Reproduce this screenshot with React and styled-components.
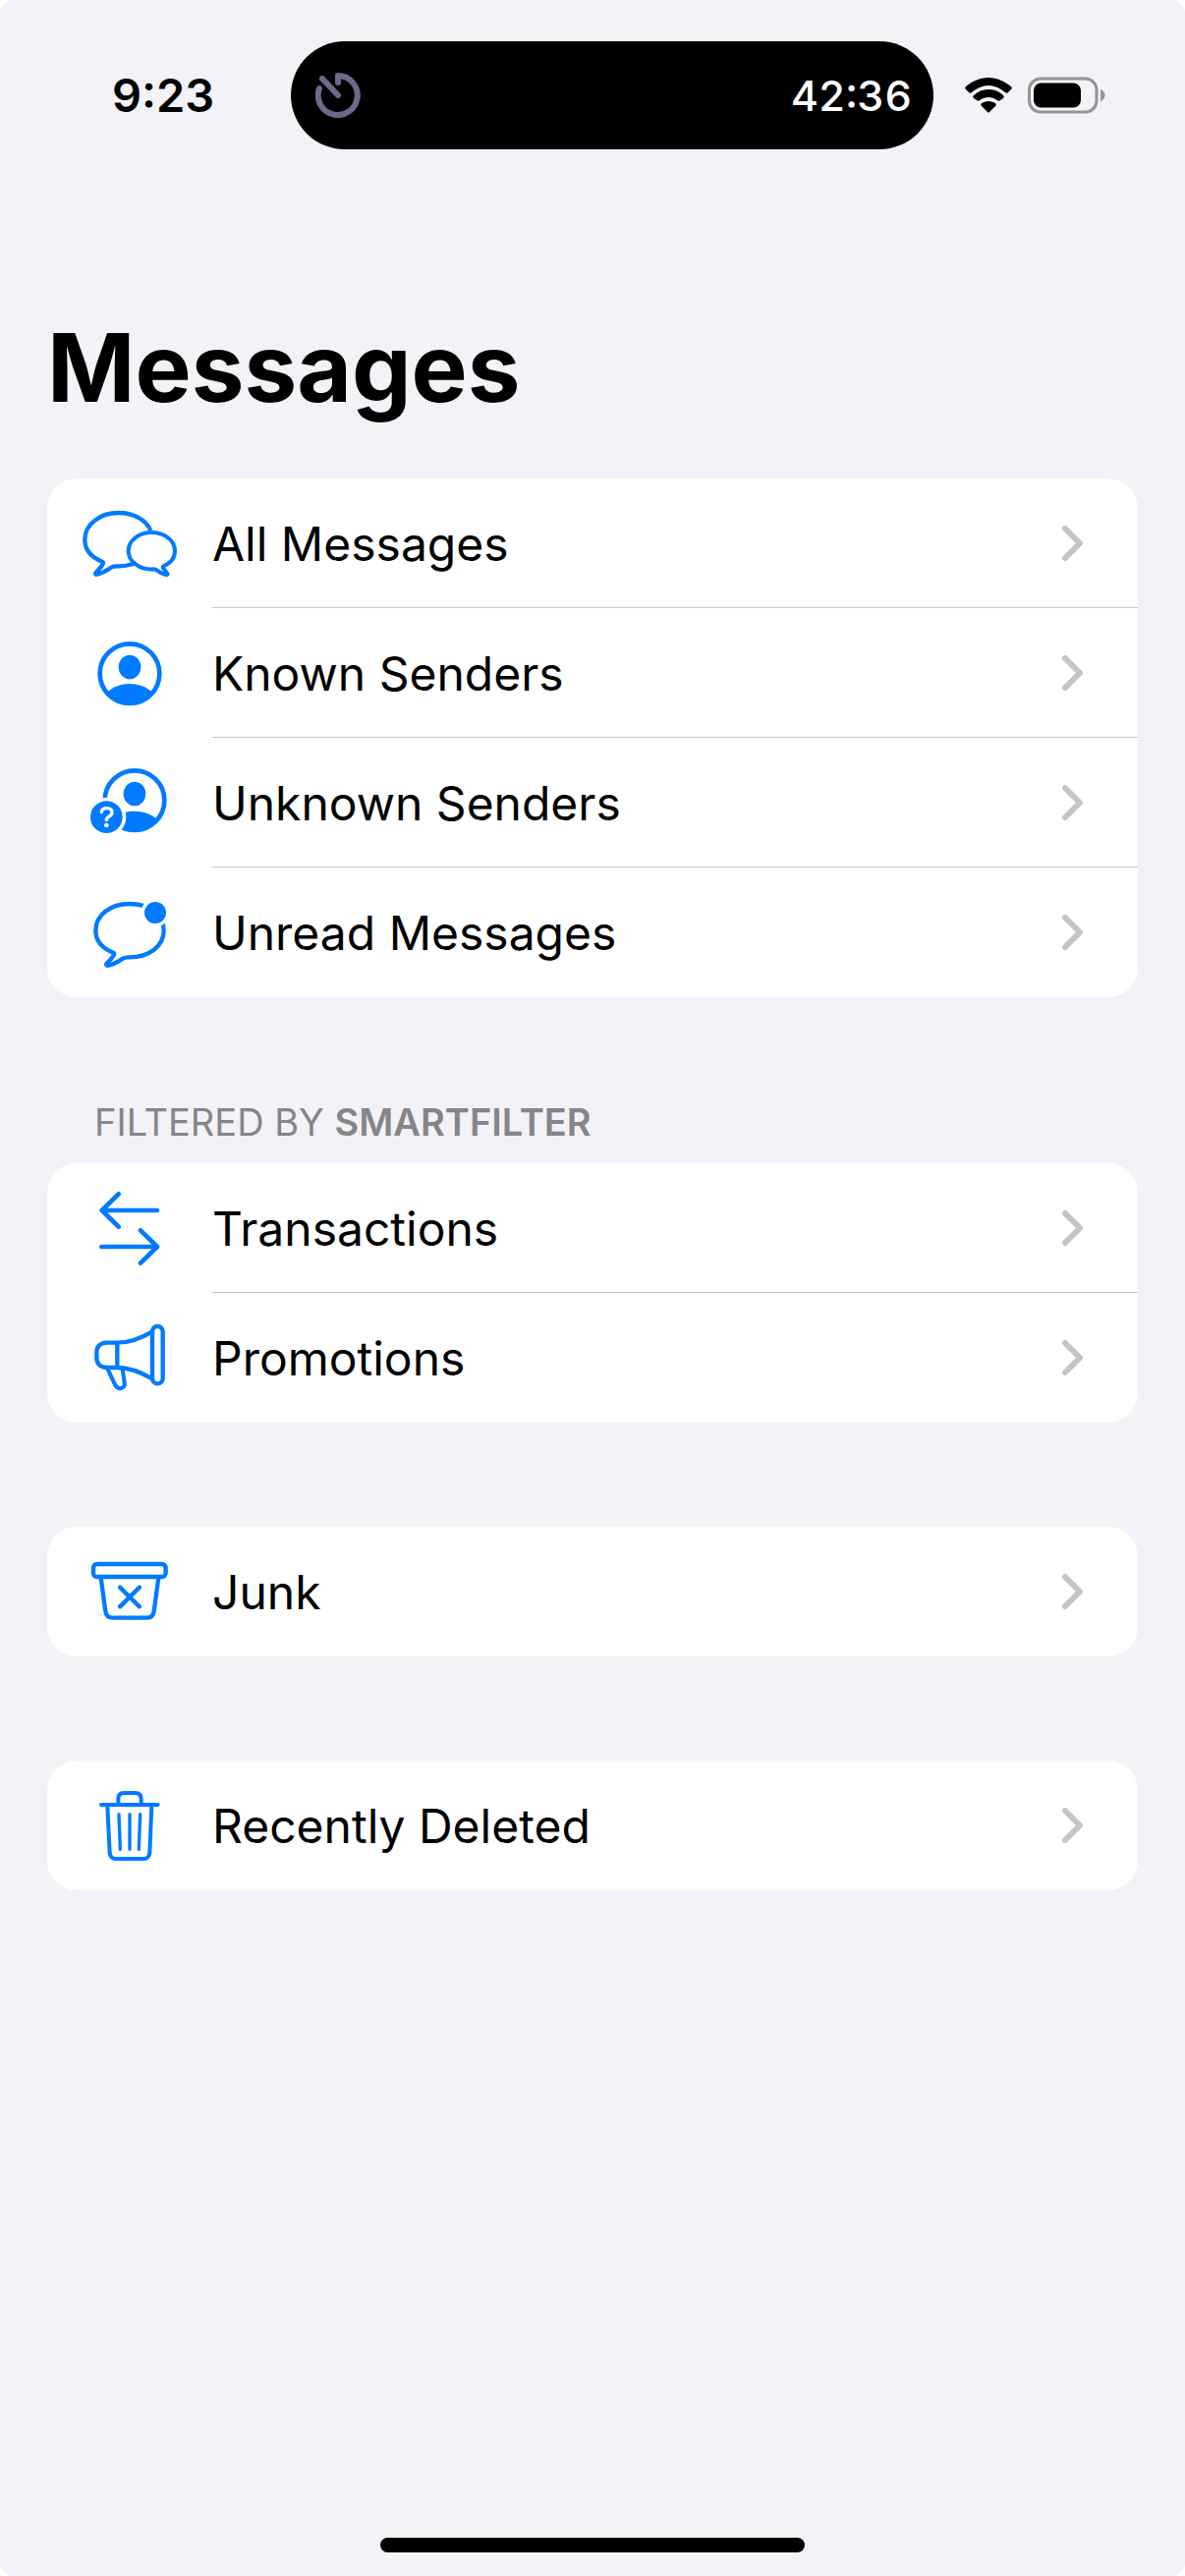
import React from "react";
import styled, { createGlobalStyle } from "styled-components";

const GlobalStyle = createGlobalStyle`
  *, *::before, *::after { box-sizing: border-box; }
  body {
    margin: 0;
    background: #ffffff;
    font-family: Inter, "Liberation Sans", sans-serif;
    color: #000000;
  }
`;

const Screen = styled.div`
  display: flex;
  flex-direction: column;
  min-height: 100vh;
  padding-bottom: 24px;
  border-radius: 14px;
  background: #f2f2f7;
`;

const StatusBar = styled.header`
  display: grid;
  grid-template-columns: 296px 1fr 256px;
  align-items: center;
  padding-top: 42px;
`;

const Clock = styled.time`
  padding-left: 114px;
  font-size: 47px;
  line-height: 56px;
  font-weight: 600;
`;

const Island = styled.div`
  display: flex;
  align-items: center;
  justify-content: space-between;
  height: 110px;
  padding: 0 22px 0 25px;
  border-radius: 55px;
  background: #000000;
  color: #ffffff;
`;

const Countdown = styled.span`
  font-size: 43px;
  line-height: 56px;
  font-weight: 500;
  font-variant-numeric: tabular-nums;
`;

const StatusIcons = styled.div`
  display: flex;
  align-items: center;
  gap: 16px;
  padding-left: 32px;
`;

const Main = styled.main`
  flex: 1;
  padding: 162px 48px 0;
`;

const Title = styled.h1`
  margin: 0 0 53px;
  font-size: 96px;
  line-height: 120px;
  font-weight: 700;
`;

const SectionHeading = styled.h2`
  margin: 0;
  padding: 0 48px;
  font-size: 38px;
  line-height: 42px;
  font-weight: 400;
  color: #85858a;
  strong { font-weight: 600; }
`;

const Section = styled.section`
  display: flex;
  flex-direction: column;
  gap: 21px;
  margin-bottom: 106px;
`;

const List = styled.ul`
  margin: 0;
  padding: 0;
  list-style: none;
  border-radius: 30px;
  background: #ffffff;
  overflow: hidden;
`;

const Row = styled.a`
  display: grid;
  grid-template-columns: 168px 1fr;
  height: 132px;
  color: inherit;
  text-decoration: none;
`;

const IconCell = styled.span`
  display: flex;
  align-items: center;
  justify-content: center;
  color: #007aff;
`;

const RowBody = styled.span`
  display: flex;
  align-items: center;
  justify-content: space-between;
  padding-right: 56px;
  border-bottom: 1px solid #c6c6c8;
  li:last-child & { border-bottom-color: transparent; }
`;

const RowLabel = styled.span`
  padding-top: 2px;
  font-size: 48px;
  line-height: 60px;
`;

const HomeBar = styled.div`
  align-self: center;
  width: 432px;
  height: 15px;
  border-radius: 8px;
  background: #000000;
`;

const Glyph = ({ top, children }) => (
  <svg
    width="108"
    height="84"
    viewBox={`54 ${top} 324 252`}
    fill="none"
    stroke="currentColor"
    strokeWidth="13"
    strokeLinecap="round"
    strokeLinejoin="round"
    aria-hidden="true"
  >
    {children}
  </svg>
);

const icons = {
  all: (
    <Glyph top={33}>
      <path strokeLinecap="butt" d="M280 120C266 87 228 66 182 66C124 66 79 102 79 148C79 179 99 202 132 215C135 216 136 219 134 222C129 232 121 240 113 248C109 252 111 255 116 254C133 251 148 241 161 232C167 228 171 229 182 229C198 229 213 226 228 222" />
      <path strokeWidth="12" d="M289 238C248 241 212 216 212 182C212 151 243 126 283 126C323 126 354 151 354 182C354 203 341 219 320 228C316 230 317 233 319 236L331 251C333 254 331 256 328 255C317 254 307 247 299 241C296 238 293 238 289 238Z" />
    </Glyph>
  ),
  known: (
    <Glyph top={429}>
      <circle cx="216" cy="557" r="91" strokeWidth="14" />
      <ellipse cx="216" cy="537" rx="34" ry="37" fill="currentColor" stroke="none" />
      <path fill="currentColor" stroke="none" d="M149 613C165 597 190 588 216 588C242 588 267 597 283 613C268 639 244 652 216 652C188 652 164 639 149 613Z" />
    </Glyph>
  ),
  unknown: (
    <Glyph top={75}>
      <circle cx="231" cy="194" r="91" strokeWidth="14" />
      <ellipse cx="231" cy="174" rx="34" ry="37" fill="currentColor" stroke="none" />
      <path fill="currentColor" stroke="none" d="M164 252C184 234 205 227 231 227C257 227 282 235 298 251C283 276 259 289 231 289C203 289 179 276 164 252Z" />
      <circle cx="145" cy="245" r="60" fill="#ffffff" stroke="none" />
      <circle cx="145" cy="245" r="49" fill="currentColor" stroke="none" />
      <path stroke="#ffffff" strokeWidth="10" d="M130 230C131 222 137 218 146 218C156 218 162 223 162 231C162 244 145 241 145 254" />
      <circle cx="145" cy="270" r="7" fill="#ffffff" stroke="none" />
    </Glyph>
  ),
  unread: (
    <Glyph top={471}>
      <path d="M216 510C276 510 320 545 320 592C320 639 275 673 216 673C205 673 203 672 195 677C182 685 167 696 150 698C145 699 142 696 147 691C155 683 163 675 168 665C170 662 169 660 165 659C131 645 112 624 112 592C112 545 156 510 216 510Z" />
      <circle cx="294" cy="537" r="43" fill="#ffffff" stroke="none" />
      <circle cx="294" cy="537" r="33" fill="currentColor" stroke="none" />
    </Glyph>
  ),
  transactions: (
    <Glyph top={84}>
      <path strokeWidth="14" d="M300 156H131M182 106L131 156L182 206M130 267H299M249 217L300 267L249 317" />
    </Glyph>
  ),
  promotions: (
    <Glyph top={480}>
      <rect x="285" y="510" width="32" height="175" rx="16" />
      <path d="M285 526C250 547 212 560 178 560H147C126 560 115 572 115 590V606C115 624 126 636 147 636H178C212 636 250 650 285 670M178 560V636" />
      <path strokeWidth="12" d="M149 641L170 686C175 697 183 701 190 699C198 697 202 691 200 681L194 641" />
    </Glyph>
  ),
  junk: (
    <Glyph top={27}>
      <rect x="105" y="69" width="221" height="39" rx="11" />
      <path d="M128 110L142 214C144 227 151 233 164 233H268C281 233 288 227 290 214L304 110M186 140L246 199M246 140L186 199" />
    </Glyph>
  ),
  deleted: (
    <Glyph top={48}>
      <path strokeWidth="12" d="M129 111H302M181 108V92C181 81 187 75 198 75H233C245 75 251 81 251 92V108M148 114L155 258C156 269 163 276 173 276H259C269 276 276 269 277 258L283 114" />
      <path strokeWidth="10" d="M183 140L187 247M216 140V247M248 140L244 247" />
    </Glyph>
  ),
};

const Chevron = () => (
  <svg width="21" height="36" viewBox="0 0 21 36" fill="none" stroke="#c5c5c7" strokeWidth="6" strokeLinecap="round" strokeLinejoin="round" aria-hidden="true">
    <path d="M3 3L18 18L3 33" />
  </svg>
);

const TimerIcon = () => (
  <svg width="46" height="46" viewBox="0 0 46 46" fill="none" stroke="#6c6a87" strokeWidth="6" strokeLinecap="round" strokeLinejoin="round" aria-hidden="true">
    <path d="M23 10V3A20 20 0 1 1 4 16M7 6L23 23" />
  </svg>
);

const WifiIcon = () => (
  <svg width="48" height="36" viewBox="0 0 48 36" fill="#000000" aria-hidden="true">
    <path d="M24 0C33 0 41 4 47 9C48 10 48 11 47 12L44 15C43 16 42 16 41 15C36 11 30 8 24 8C18 8 12 11 7 15C6 16 5 16 4 15L1 12C0 11 0 10 1 9C7 4 15 0 24 0Z" />
    <path d="M24 12C30 12 35 14 39 18C40 19 40 20 39 21L36 23C35 24 34 24 33 23C30 21 27 20 24 20C21 20 18 21 15 23C14 24 13 24 12 23L9 21C8 20 8 19 9 18C13 14 18 12 24 12Z" />
    <path d="M24 24C27 24 29 25 31 26C32 27 32 28 31 29L25 35C24 36 24 36 23 35L17 29C16 28 16 27 17 26C19 25 21 24 24 24Z" />
  </svg>
);

const BatteryIcon = () => (
  <svg width="79" height="38" viewBox="0 0 79 38" aria-hidden="true">
    <rect x="1.5" y="2" width="68.5" height="34" rx="11.5" fill="none" stroke="#949496" strokeWidth="3" />
    <rect x="6" y="6.5" width="48" height="25" rx="7.5" fill="#000000" />
    <path d="M74 13C77 14 78.5 16.5 78.5 19C78.5 21.5 77 24 74 25Z" fill="#949496" />
  </svg>
);

const groups = [
  {
    id: "messages",
    rows: [
      ["all", "All Messages"],
      ["known", "Known Senders"],
      ["unknown", "Unknown Senders"],
      ["unread", "Unread Messages"],
    ],
  },
  {
    id: "filtered",
    heading: (
      <>
        FILTERED BY <strong>SMARTFILTER</strong>
      </>
    ),
    rows: [
      ["transactions", "Transactions"],
      ["promotions", "Promotions"],
    ],
  },
  { id: "junk", rows: [["junk", "Junk"]] },
  { id: "deleted", rows: [["deleted", "Recently Deleted"]] },
];

export default function App() {
  return (
    <>
      <GlobalStyle />
      <Screen>
        <StatusBar>
          <Clock>9:23</Clock>
          <Island>
            <TimerIcon />
            <Countdown>42:36</Countdown>
          </Island>
          <StatusIcons>
            <WifiIcon />
            <BatteryIcon />
          </StatusIcons>
        </StatusBar>
        <Main>
          <Title>Messages</Title>
          {groups.map(({ id, heading, rows }) => (
            <Section key={id}>
              {heading && <SectionHeading>{heading}</SectionHeading>}
              <List>
                {rows.map(([icon, label]) => (
                  <li key={icon}>
                    <Row href={`#${icon}`}>
                      <IconCell>{icons[icon]}</IconCell>
                      <RowBody>
                        <RowLabel>{label}</RowLabel>
                        <Chevron />
                      </RowBody>
                    </Row>
                  </li>
                ))}
              </List>
            </Section>
          ))}
        </Main>
        <HomeBar />
      </Screen>
    </>
  );
}
